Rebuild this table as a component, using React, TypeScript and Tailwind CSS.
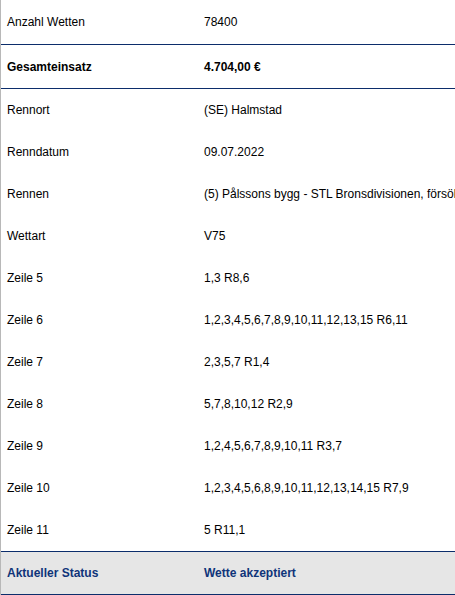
import React from 'react';

const rows = [
  { label: 'Rennort', value: '(SE) Halmstad' },
  { label: 'Renndatum', value: '09.07.2022' },
  { label: 'Rennen', value: '(5) Pålssons bygg - STL Bronsdivisionen, försök 7 i Meeting 4' },
  { label: 'Wettart', value: 'V75' },
  { label: 'Zeile 5', value: '1,3 R8,6' },
  { label: 'Zeile 6', value: '1,2,3,4,5,6,7,8,9,10,11,12,13,15 R6,11' },
  { label: 'Zeile 7', value: '2,3,5,7 R1,4' },
  { label: 'Zeile 8', value: '5,7,8,10,12 R2,9' },
  { label: 'Zeile 9', value: '1,2,4,5,6,7,8,9,10,11 R3,7' },
  { label: 'Zeile 10', value: '1,2,3,4,5,6,8,9,10,11,12,13,14,15 R7,9' },
  { label: 'Zeile 11', value: '5 R11,1' }
];

export default function App() {
  return (
    <div className="w-[455px] h-[595px] overflow-hidden bg-white text-[12px] text-black font-['Liberation_Sans',Arial,sans-serif]">
      <div className="border-l border-[#b8b8b8] flex flex-col">
        {/* Summary */}
        <div className="h-[45px] flex items-center border-b border-[#0c2d6b] whitespace-nowrap">
          <span className="w-[203px] pl-[6px] shrink-0">Anzahl Wetten</span>
          <span>78400</span>
        </div>
        <div className="h-[44px] flex items-center border-b border-[#0c2d6b] font-bold whitespace-nowrap">
          <span className="w-[203px] pl-[6px] shrink-0">Gesamteinsatz</span>
          <span>4.704,00 €</span>
        </div>

        {/* Bet details */}
        {rows.map(row => (
          <div key={row.label} className="h-[42px] flex items-center whitespace-nowrap overflow-hidden">
            <span className="w-[203px] pl-[6px] shrink-0">{row.label}</span>
            <span>{row.value}</span>
          </div>
        ))}

        {/* Status */}
        <div className="h-[44px] flex items-center bg-[#e6e6e6] border-y border-[#0c2d6b] font-bold text-[#0f3479] whitespace-nowrap">
          <span className="w-[203px] pl-[6px] shrink-0">Aktueller Status</span>
          <span>Wette akzeptiert</span>
        </div>
      </div>
    </div>
  );
}
